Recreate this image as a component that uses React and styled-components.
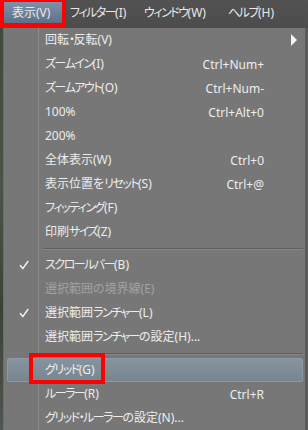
import styled, { createGlobalStyle } from 'styled-components';

const GlobalStyle = createGlobalStyle`
    html, body {
        margin: 0;
        padding: 0;
        background: #4f4f4f;
    }
    body {
        font-family: "Noto Sans", "Noto Sans CJK JP", sans-serif;
        font-size: 12px;
        font-feature-settings: "palt" 1;
    }
`;

const menuBarItems = [
    { label: '表示(V)', open: true, width: 58 },
    { label: 'フィルター(I)', width: 74 },
    { label: 'ウィンドウ(W)', width: 84 },
    { label: 'ヘルプ(H)', width: 70 },
];

const menuItems = [
    { label: '回転・反転(V)', submenu: true },
    { label: 'ズームイン(I)', shortcut: 'Ctrl+Num+' },
    { label: 'ズームアウト(O)', shortcut: 'Ctrl+Num-' },
    { label: '100%', shortcut: 'Ctrl+Alt+0' },
    { label: '200%' },
    { label: '全体表示(W)', shortcut: 'Ctrl+0' },
    { label: '表示位置をリセット(S)', shortcut: 'Ctrl+@' },
    { label: 'フィッティング(F)' },
    { label: '印刷サイズ(Z)' },
    { separator: true },
    { label: 'スクロールバー(B)', checked: true },
    { label: '選択範囲の境界線(E)', disabled: true },
    { label: '選択範囲ランチャー(L)', checked: true },
    { label: '選択範囲ランチャーの設定(H)...' },
    { separator: true },
    { label: 'グリッド(G)', active: true, marked: true },
    { label: 'ルーラー(R)', shortcut: 'Ctrl+R' },
    { label: 'グリッド・ルーラーの設定(N)...' },
];

// katakana in the original UI font is much narrower than in Noto CJK
const Text = ({ children }) =>
    children.split(/([\u30A0-\u30FF]+)/).map((part, i) =>
        /[\u30A0-\u30FF]/.test(part) ? <Kana key={i}>{part}</Kana> : part
    );

const CheckIcon = () => (
    <svg width="10" height="10" viewBox="0 0 10 10">
        <path d="M1 5.2 L3.8 8.6 L9.2 1" fill="none" stroke="#f2f2f2" strokeWidth="1.5" />
    </svg>
);

const App = () => {
    return (
        <Page>
            <GlobalStyle />
            <MenuBar>
                {menuBarItems.map((item) => (
                    <BarItem key={item.label} open={item.open} width={item.width}>
                        <Text>{item.label}</Text>
                    </BarItem>
                ))}
            </MenuBar>
            <Body>
                <CanvasEdge />
                <Dropdown>
                    {menuItems.map((item, i) =>
                        item.separator ? (
                            <Separator key={i} />
                        ) : (
                            <Row key={i} active={item.active} disabled={item.disabled}>
                                <Check>{item.checked && <CheckIcon />}</Check>
                                <Label>
                                    <Text>{item.label}</Text>
                                    {item.marked && <Mark />}
                                </Label>
                                <Shortcut>{item.shortcut}</Shortcut>
                                <Arrow>{item.submenu && <Triangle />}</Arrow>
                            </Row>
                        )
                    )}
                </Dropdown>
                <RightEdge />
            </Body>
        </Page>
    );
};

const Page = styled.div`
    width: 308px;
    height: 430px;
    overflow: hidden;
    display: flex;
    flex-direction: column;
    background: #4f4f4f;
`;

const MenuBar = styled.div`
    display: flex;
    align-items: center;
    height: 28px;
    padding-left: 4px;
    background: linear-gradient(#525252, #4c4c4c);
    flex-shrink: 0;
`;

const BarItem = styled.div`
    flex-shrink: 0;
    width: ${(p) => p.width}px;
    box-sizing: border-box;
    height: 21px;
    margin-top: -3px;
    line-height: 21px;
    padding-left: 8px;
    color: #e9e9e9;
    white-space: nowrap;
    background: ${(p) => (p.open ? 'linear-gradient(#7e91a8, #5f7189)' : 'transparent')};
    outline: ${(p) => (p.open ? '4px solid #ff0000' : 'none')};
`;

const Kana = styled.span`
    letter-spacing: -1.5px;
`;

const Body = styled.div`
    flex: 1;
    display: flex;
`;

const CanvasEdge = styled.div`
    width: 3px;
    background: linear-gradient(#3f4a3a, #4c5348 40%, #3a4236 70%, #505650);
`;

const RightEdge = styled.div`
    width: 3px;
    background: #5a5a5a;
`;

const Dropdown = styled.div`
    flex: 1;
    padding-right: 2px;
    background:
        linear-gradient(to right, transparent 34px, #8b8b8b 34px, #8b8b8b 35px, transparent 35px),
        #777777;
    border-left: 1px solid #6c6c6c;
`;

const Row = styled.div`
    position: relative;
    display: grid;
    grid-template-columns: 30px 1fr auto 38px;
    align-items: center;
    height: 24px;
    margin-left: 3px;
    box-sizing: border-box;
    color: ${(p) => (p.disabled ? '#a2a2a2' : '#ededed')};
    background: ${(p) => (p.active ? 'linear-gradient(#86949f, #77858f)' : 'transparent')};
    border: 1px solid ${(p) => (p.active ? '#8d9aa4' : 'transparent')};
    border-radius: 2px;
`;

const Check = styled.div`
    display: flex;
    justify-content: center;
    padding-left: 1px;
`;

const Label = styled.span`
    position: relative;
    justify-self: start;
    margin-left: 7px;
    white-space: nowrap;
    line-height: 22px;
`;

const Mark = styled.span`
    position: absolute;
    left: -16px;
    right: -10px;
    top: -6px;
    bottom: -3px;
    border: 4px solid #ff0000;
`;

const Shortcut = styled.span`
    white-space: nowrap;
`;

const Arrow = styled.div`
    display: flex;
    justify-content: flex-end;
    padding-right: 5px;
`;

const Triangle = styled.span`
    width: 0;
    height: 0;
    border-top: 6px solid transparent;
    border-bottom: 6px solid transparent;
    border-left: 6px solid #f4f4f4;
`;

const Separator = styled.div`
    height: 9px;
    padding-top: 4px;
    box-sizing: border-box;
    margin-left: 39px;

    &::before {
        content: '';
        display: block;
        height: 1px;
        background: #5e5e5e;
        border-bottom: 1px solid #878787;
    }
`;

export default App;
